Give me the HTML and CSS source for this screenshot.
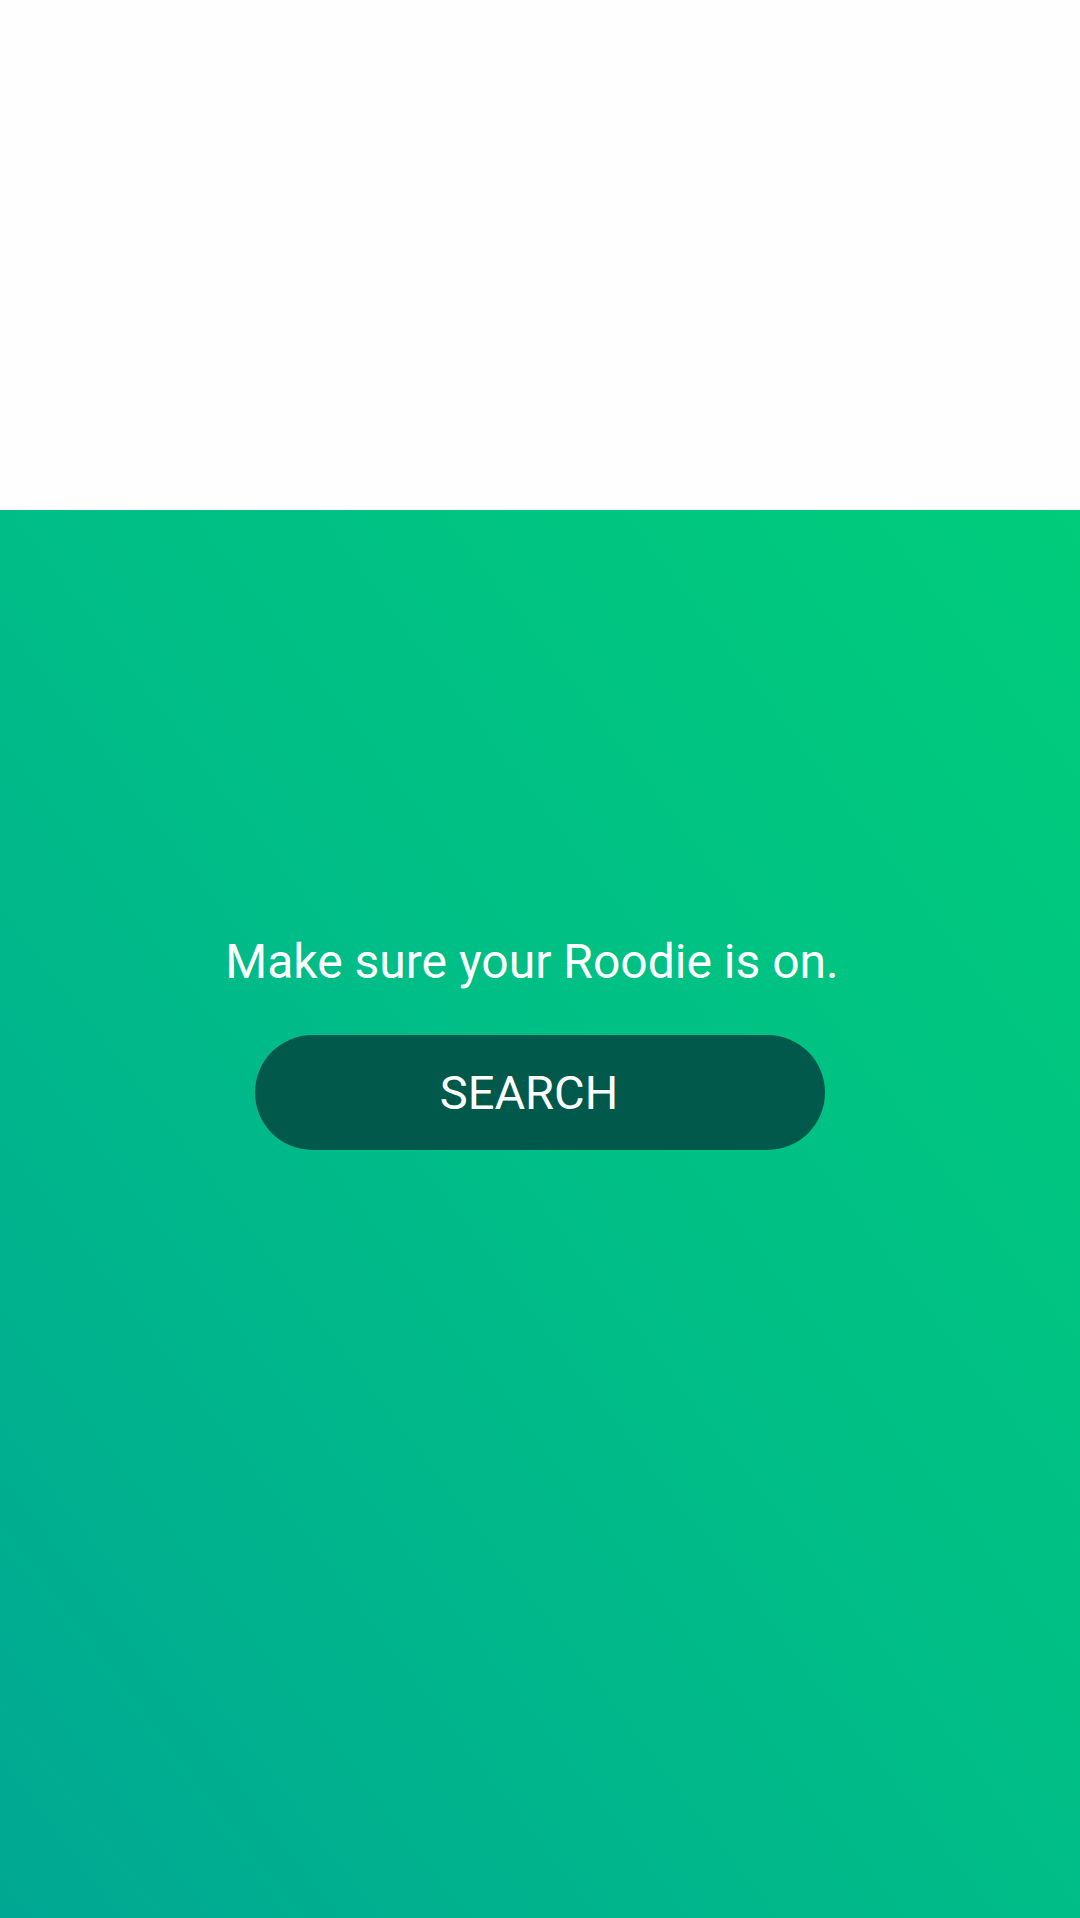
FILE: index.html
```html
<!DOCTYPE html>
<html lang="en">
<head>
<meta charset="utf-8">
<title>Roodie</title>
<link rel="stylesheet" href="styles.css">
</head>
<body>
<div class="screen">
  <div class="top"></div>
  <main class="panel">
    <p class="message">Make sure your Roodie is on.</p>
    <button class="search-btn" type="button">SEARCH</button>
  </main>
</div>
</body>
</html>
```

FILE: styles.css
```css
* { box-sizing: border-box; }
html, body {
  margin: 0;
  padding: 0;
  width: 1080px;
  height: 1918px;
  overflow: hidden;
  background: #fefefe;
  font-family: Roboto, "Liberation Sans", sans-serif;
}
.screen {
  display: flex;
  flex-direction: column;
  height: 1918px;
}
.top {
  height: 510px;
  background: #fefefe;
  flex: none;
}
.panel {
  flex: 1;
  display: flex;
  flex-direction: column;
  align-items: center;
  background: linear-gradient(to top right, #00a893 0%, #00bd87 50%, #00cc7b 100%);
}
.message {
  margin: 422px 16px 0 0;
  color: #ffffff;
  font-size: 48px;
  line-height: 60px;
  font-weight: 400;
}
.search-btn {
  margin-top: 43px;
  width: 570px;
  height: 115px;
  border: none;
  border-radius: 58px;
  background: #00594b;
  color: #ffffff;
  font-family: Roboto, "Liberation Sans", sans-serif;
  font-size: 47px;
  font-weight: 400;
  padding: 0 22px 0 0;
}
```
